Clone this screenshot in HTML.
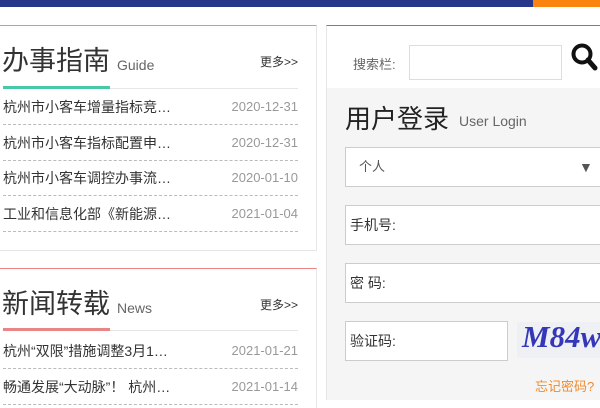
<!DOCTYPE html><html><head><meta charset="utf-8"><style>
*{margin:0;padding:0;box-sizing:border-box}
body{width:600px;height:400px;overflow:hidden;background:#fff;font-family:"Liberation Sans","Noto Sans CJK SC",sans-serif;position:relative}
.a{position:absolute;white-space:nowrap}
.row{position:absolute;left:3px;width:295px;height:36px;border-bottom:1px dashed #bbb;font-size:14px;color:#333}
.row span{position:absolute;top:9px;line-height:18px}
.row .d{right:0;color:#999;font-size:13px}
.inp{position:absolute;background:#fff;border:1px solid #ccc;font-size:14px;color:#333}
.inp span{position:absolute;left:4px;top:10px;line-height:18px}
</style></head><body>
<div class="a" style="left:0;top:0;width:533px;height:7px;background:#26378a"></div>
<div class="a" style="left:533px;top:0;width:67px;height:7px;background:#fb8411"></div>

<div class="a" style="left:0;top:25px;width:317px;height:226px;border-top:1px solid #5fc9c0;border-right:1px solid #e6e6e6;border-bottom:1px solid #e6e6e6"></div>
<div class="a" style="left:2px;top:43px;font-size:27px;line-height:36px;color:#333">办事指南</div>
<div class="a" style="left:117px;top:57px;font-size:14px;color:#666">Guide</div>
<div class="a" style="left:260px;top:53px;font-size:12px;color:#333">更多&gt;&gt;</div>
<div class="a" style="left:3px;top:88px;width:295px;height:1px;background:#e6e6e6"></div>
<div class="a" style="left:3px;top:86px;width:107px;height:3px;background:#48c8a8"></div>
<div class="row" style="top:89px"><span>杭州市小客车增量指标竞…</span><span class="d">2020-12-31</span></div>
<div class="row" style="top:125px"><span>杭州市小客车指标配置申…</span><span class="d">2020-12-31</span></div>
<div class="row" style="top:160px"><span>杭州市小客车调控办事流…</span><span class="d">2020-01-10</span></div>
<div class="row" style="top:196px"><span>工业和信息化部《新能源…</span><span class="d">2021-01-04</span></div>

<div class="a" style="left:0;top:268px;width:317px;height:140px;border-top:1px solid #e98585;border-right:1px solid #e6e6e6"></div>
<div class="a" style="left:2px;top:286px;font-size:27px;line-height:36px;color:#333">新闻转载</div>
<div class="a" style="left:117px;top:300px;font-size:14px;color:#666">News</div>
<div class="a" style="left:260px;top:296px;font-size:12px;color:#333">更多&gt;&gt;</div>
<div class="a" style="left:3px;top:330px;width:295px;height:1px;background:#e6e6e6"></div>
<div class="a" style="left:3px;top:328px;width:107px;height:3px;background:#e98585"></div>
<div class="row" style="top:333px"><span>杭州“双限”措施调整3月1…</span><span class="d">2021-01-21</span></div>
<div class="row" style="top:369px"><span>畅通发展“大动脉”！ 杭州…</span><span class="d">2021-01-14</span></div>

<div class="a" style="left:326px;top:25px;width:274px;height:375px;border-top:1px solid #3f8fcf;border-left:1px solid #e6e6e6;background:#f5f5f5"></div>
<div class="a" style="left:327px;top:26px;width:273px;height:62px;background:#fff"></div>
<div class="a" style="left:353px;top:56px;font-size:13px;line-height:18px;color:#666">搜索栏:</div>
<div class="inp" style="left:409px;top:45px;width:153px;height:35px;border-color:#ddd"></div>
<svg class="a" style="left:570px;top:42px" width="28" height="30" viewBox="0 0 28 30"><circle cx="12" cy="12" r="8.5" fill="none" stroke="#111" stroke-width="4"/><path d="M18 18l7 8" stroke="#111" stroke-width="5" stroke-linecap="round"/></svg>
<div class="a" style="left:345px;top:101px;font-size:26px;line-height:36px;color:#222">用户登录</div>
<div class="a" style="left:459px;top:113px;font-size:14px;color:#666">User Login</div>
<div class="inp" style="left:345px;top:147px;width:260px;height:40px"><span style="left:13px;top:10px;font-size:13px;color:#555">个人</span><span style="left:233px;top:10px;font-size:14px;color:#555">▼</span></div>
<div class="inp" style="left:345px;top:205px;width:260px;height:40px"><span>手机号:</span></div>
<div class="inp" style="left:345px;top:263px;width:260px;height:40px"><span>密 码:</span></div>
<div class="inp" style="left:345px;top:321px;width:163px;height:40px"><span>验证码:</span></div>
<div class="a" style="left:517px;top:322px;width:83px;height:36px;background:#eef0f4"></div>
<div class="a" style="left:522px;top:319px;font:italic bold 31px 'Liberation Serif',serif;color:#3438b8">M84w</div>
<div class="a" style="left:535px;top:378px;font-size:13px;line-height:18px;color:#f08a2e">忘记密码?</div>
</body></html>
